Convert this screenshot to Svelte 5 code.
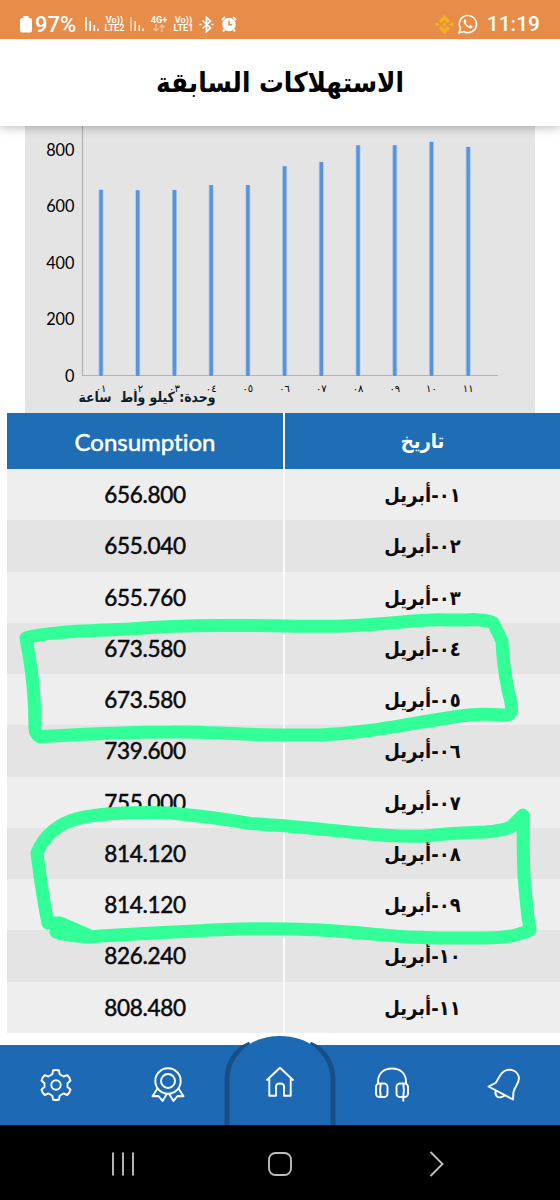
<script lang="ts">
    const readings = [
        { day: "٠١", value: 656.8 },
        { day: "٠٢", value: 655.04 },
        { day: "٠٣", value: 655.76 },
        { day: "٠٤", value: 673.58 },
        { day: "٠٥", value: 673.58 },
        { day: "٠٦", value: 739.6 },
        { day: "٠٧", value: 755 },
        { day: "٠٨", value: 814.12 },
        { day: "٠٩", value: 814.12 },
        { day: "١٠", value: 826.24 },
        { day: "١١", value: 808.48 },
    ];

    const ticks = [800, 600, 400, 200, 0];
    const baseline = 249.5;
    const unitHeight = 0.2828;
    const firstBar = 76;
    const barGap = 36.72;

    function barX(index: number) {
        return firstBar + index * barGap;
    }

    function valueY(value: number) {
        return baseline - value * unitHeight;
    }
</script>

<div class="screen">
    <div class="status-bar">
        <div class="status-group">
            <svg class="battery" width="12" height="17" viewBox="0 0 12 17">
                <path d="M3.5 0h5v2H10a2 2 0 0 1 2 2v10.5a2 2 0 0 1-2 2H2a2 2 0 0 1-2-2V4a2 2 0 0 1 2-2h1.5z" fill="#fff" />
            </svg>
            <span class="percent">97%</span>
            <svg class="signal" width="14" height="16" viewBox="0 0 14 16">
                <path d="M1 1v14M5.2 5v10M9.3 9v6M13 12.5v2.5" />
            </svg>
            <span class="lte">Vo))<br />LTE2</span>
            <svg class="signal thin" width="14" height="16" viewBox="0 0 14 16">
                <path d="M1 1v14" opacity="0.6" />
                <path d="M5.2 5v10M9.3 9v6M13 12.5v2.5" />
            </svg>
            <span class="lte net">
                4G+
                <svg width="12" height="8" viewBox="0 0 12 8">
                    <path d="M3 0v7M.5 4.500L3 7l2.500-2.500M9 8V1M6.500 3.500L9 1l2.500 2.500" />
                </svg>
            </span>
            <span class="lte">Vo))<br />LTE1</span>
            <svg class="bluetooth" width="15" height="17" viewBox="0 0 15 17">
                <path d="M3.5 4.500l8 7.500-4 3.500v-14l4 3.500-8 7.500" />
                <path d="M.5 8.500h2M12.500 8.500h2" />
            </svg>
            <svg class="alarm" width="16" height="16" viewBox="0 0 16 16">
                <circle cx="8" cy="8.5" r="6.7" fill="#fff" />
                <path d="M1 4l3-3M15 4l-3-3M3.5 13.5L2 15.3M12.5 13.5l1.5 1.8" stroke="#fff" stroke-width="2" />
                <path d="M8 4.500v4.300h3.200" fill="none" stroke="#e88d49" stroke-width="1.500" />
            </svg>
        </div>
        <div class="status-group">
            <svg class="binance" width="19" height="19" viewBox="0 0 20 20" fill="#f0b41b">
                <path d="M10 0l6 6-2.600 2.600L10 5.200 6.600 8.600 4 6zM10 20l6-6-2.600-2.600-3.400 3.400-3.400-3.400L4 14zM2.400 7.600L4.800 10l-2.400 2.400L0 10zM17.600 7.600L20 10l-2.400 2.400-2.400-2.400zM10 7.600l2.400 2.400-2.400 2.400L7.600 10z" />
            </svg>
            <svg class="whatsapp" width="20" height="20" viewBox="0 0 20 20">
                <path d="M1.200 18.800l1.200-4.600A8.600 8.600 0 1 1 5.800 17.600z" fill="none" stroke="#fff" stroke-width="1.600" />
                <path d="M6.800 5.200c-1.900 1.200-1.200 4.100 1 6.400s4.700 3.700 6.300 2.200c.8-.8.7-1.400-.2-1.900l-1.400-.7c-.8-.3-1 .8-1.600.9-1 0-3.100-2.100-3.200-3 .1-.6 1-.9.7-1.600l-.7-1.700c-.2-.5-.5-.8-.9-.6z" fill="#fff" />
            </svg>
            <span class="clock">11:19</span>
        </div>
    </div>

    <header dir="rtl"><h1>الاستهلاكات السابقة</h1></header>

    <main>
        <svg class="chart" width="510" height="287" viewBox="0 0 510 287">
            <path d="M57.5 0V249.5H473" class="axis" />
            {#each ticks as tick}
                <text class="tick" x="49.5" y={valueY(tick) + 6.5}>{tick}</text>
            {/each}
            {#each readings as { day, value }, index}
                <rect class="bar-edge" x={barX(index) - 2.5} y={valueY(value)} width="5" height={value * unitHeight + 0.5} />
                <rect class="bar" x={barX(index) - 1.7} y={valueY(value)} width="3.4" height={value * unitHeight + 0.5} />
                <text class="day" x={barX(index)} y="266">{day}</text>
            {/each}
            <text class="unit" x="122" y="276" direction="rtl" textLength="137" lengthAdjust="spacingAndGlyphs">وحدة: كيلو واط&nbsp; ساعة</text>
        </svg>

        <div class="table">
            <div class="row head">
                <span>Consumption</span>
                <span class="date" dir="rtl">تاريخ</span>
            </div>
            {#each readings as { day, value }}
                <div class="row">
                    <span>{value.toFixed(3)}</span>
                    <span class="date" dir="rtl">{day}-أبريل</span>
                </div>
            {/each}
        </div>
    </main>

    <nav>
        <svg class="home-tab" width="112" height="90" viewBox="0 0 112 90">
            <path d="M3 90V46C3 27 12 15 26 9H86C100 15 109 27 109 46V90" fill="#1e69b3" />
            <path d="M3 90V46C3 27 12 15 26 9M86 9C100 15 109 27 109 46V90" fill="none" stroke="#184f86" stroke-width="5" />
            <path d="M6 90V46C7 17 28 1 56 1s49 16 50 45v44z" fill="#1e69b3" />
        </svg>
        <div class="tab">
            <svg width="34" height="34" viewBox="0 0 34 34">
                <path d="M14 2.500Q17 1.500 20 2.500L20.700 6.300L24.500 8.500L28.300 7.200Q31 9.500 31.500 12.500L28.500 15.300V19L31.500 21.500Q31 24.500 28.300 27L24.500 25.500L20.700 27.700L20 31.500Q17 32.500 14 31.500L13.300 27.700L9.500 25.500L5.700 27Q3 24.500 2.500 21.500L5.500 19V15.300L2.500 12.500Q3 9.500 5.700 7.200L9.500 8.500L13.300 6.300Z" />
                <circle cx="17" cy="17" r="4.7" />
            </svg>
        </div>
        <div class="tab">
            <svg width="34" height="36" viewBox="0 0 34 36">
                <circle cx="17" cy="14" r="12.7" />
                <circle cx="17" cy="14" r="7" />
                <path d="M6.500 21.500L1.500 29.300L7.500 29L11.500 34L16 26.800M27.500 21.500L32.500 29.300L26.500 29L22.500 34L18 26.800" />
            </svg>
        </div>
        <div class="tab home">
            <svg width="30" height="32" viewBox="0 0 30 32">
                <path d="M1.500 15.500L15 2.800L28.500 15.500M4.300 13.500V30.700H11V21.500Q11 18.500 15 18.500T19 21.500V30.700H25.700V13.500" />
            </svg>
        </div>
        <div class="tab">
            <svg width="36" height="36" viewBox="0 0 36 36">
                <path d="M4 17V15C4 6 10 1.500 18 1.500S32 6 32 15V17" />
                <rect x="2" y="16.5" width="11.5" height="13.5" rx="3.5" />
                <rect x="22.5" y="16.5" width="11.5" height="13.5" rx="3.5" />
                <path d="M6.700 17Q5.500 23 6.700 30M29.300 17Q30.500 23 29.300 30V34.500" />
            </svg>
        </div>
        <div class="tab">
            <svg width="34" height="34" viewBox="0 0 34 34">
                <path d="M1.500 18.500L26 31.500L26.500 24C28 18 32 16 32 10C31 3 24 0 17.500 3C12 6 12 11 8.500 15Z" />
                <path d="M9 22.500C7 27 10.500 30 14 29.200Q17 28.500 18 27.200" />
            </svg>
        </div>
    </nav>

    <footer>
        <svg width="24" height="24" viewBox="0 0 24 24"><path d="M2 .5v23M12 .5v23M22 .5v23" /></svg>
        <svg width="26" height="26" viewBox="0 0 26 26"><rect x="2" y="2" width="22" height="22" rx="6.5" /></svg>
        <svg width="24" height="26" viewBox="0 0 24 26"><path d="M6.500 1l12 12-12 12" /></svg>
    </footer>

    <svg class="marks" width="560" height="1200" viewBox="0 0 560 1200">
        <path d="M26 638C45 632 83 631 130 629C165 626 180 625.500 220 625.500C280 625 300 627 345 626C380 625 405 621 430 620C445 619 455 621 473 619.500Q486 620 493 622.500L502 641Q503 665 508 690Q513 708 511 712Q510 715.500 503 715Q478 713 460 716C405 724 370 733 320 735C230 736 215 731 170 732Q120 732 43 736.500L40 737Q35 734 35 728Q35 690 29 655Z" />
        <path d="M48 923Q43 900 37 853C44 836 58 824 76 819C105 811 165 812 180 814Q220 818 250 823.500C300 826 345 832 360 833Q395 837 425 836Q450 833 485 832Q507 830 512 826L523 815Q523 850 524 876Q525 888 528 918Q530 928 530 930C516 937 500 938 485 938C390 939 390 934 320 930C250 927 210 930 195 931Q130 934 86 937Q62 935 56 932M48 923L60 923Q74 929 88 935L56 932" />
    </svg>
</div>

<style>
    :global(body) {
        margin: 0;
        background: #fff;
    }

    .screen {
        position: relative;
        display: flex;
        flex-direction: column;
        width: 560px;
        height: 1200px;
        overflow: hidden;
        background: #fff;
        color: #0b0b0d;
        font-family: Lato, "DejaVu Sans", sans-serif;
        font-variant-ligatures: no-common-ligatures;
    }

    .status-bar {
        position: relative;
        z-index: 2;
        display: flex;
        justify-content: space-between;
        box-sizing: border-box;
        height: 39px;
        padding: 8px 20px 0;
        background: #e88d49;
        color: #fff;
        font-family: Roboto, sans-serif;
    }

    .status-group {
        display: flex;
        align-items: center;
        height: 32px;
    }

    .percent {
        width: 43px;
        margin: 0 7px 0 3px;
        font-size: 22px;
        font-weight: 500;
        white-space: nowrap;
    }

    .signal,
    .bluetooth {
        fill: none;
        stroke: #fff;
        stroke-width: 1.7;
    }

    .signal.thin {
        margin-left: 5px;
        stroke-width: 1.5;
    }

    .lte {
        width: 21px;
        margin-left: 5px;
        font-size: 9.2px;
        font-weight: 600;
        line-height: 8.5px;
        text-align: center;
        white-space: nowrap;
    }

    .lte.net {
        width: 18px;
        margin-left: 6px;
    }

    .lte svg {
        display: block;
        margin: 0 auto;
        fill: none;
        stroke: #fff;
        stroke-width: 1.2;
        opacity: 0.5;
    }

    .bluetooth {
        margin-left: 5px;
    }

    .alarm {
        margin-left: 7px;
    }

    .whatsapp {
        margin: 0 9px 0 4px;
    }

    .clock {
        font-size: 21px;
        font-weight: 500;
    }

    header {
        z-index: 1;
        display: flex;
        align-items: center;
        justify-content: center;
        box-sizing: border-box;
        height: 87px;
        padding-bottom: 2px;
        background: #fff;
        box-shadow: 0 2px 9px rgba(0, 0, 0, 0.25);
    }

    h1 {
        margin: 0;
        color: #000;
        font-family: "DejaVu Sans Condensed", "DejaVu Sans", sans-serif;
        font-size: 27.5px;
        font-stretch: condensed;
        font-weight: 700;
        line-height: 40px;
    }

    main {
        flex: 1;
    }

    .chart {
        display: block;
        margin-left: 25px;
        background: #e4e4e4;
    }

    .axis {
        fill: none;
        stroke: #b1b1b1;
        stroke-width: 1.2;
    }

    .tick {
        font-size: 16.3px;
        text-anchor: end;
    }

    .bar-edge {
        fill: #a9c9ee;
    }

    .bar {
        fill: #5a94d8;
    }

    .day {
        font-family: "DejaVu Sans", sans-serif;
        font-size: 10px;
        text-anchor: middle;
    }

    .unit {
        fill: #0f1d2b;
        font-family: "DejaVu Sans Condensed", "DejaVu Sans", sans-serif;
        font-size: 14px;
        font-stretch: condensed;
        font-weight: 700;
        text-anchor: middle;
    }

    .table {
        margin-left: 7px;
    }

    .row {
        display: grid;
        grid-template-columns: 276px 1fr;
        gap: 2px;
        height: 51.27px;
        background: #fafafa;
        font-size: 22.5px;
        line-height: 50px;
        text-align: center;
        letter-spacing: -0.3px;
        -webkit-text-stroke: 0.5px;
    }

    .row span {
        box-sizing: border-box;
        padding-top: 1px;
        background: #e4e4e4;
    }

    .row:nth-child(even) span {
        background: #eee;
    }

    .row .date {
        font-family: "DejaVu Sans Condensed", "DejaVu Sans", sans-serif;
        font-size: 20px;
        font-stretch: condensed;
        font-weight: 700;
        letter-spacing: 0;
        -webkit-text-stroke: 0;
    }

    .row.head {
        height: 56px;
        color: #fff;
        font-size: 24px;
        line-height: 55px;
        letter-spacing: 0;
    }

    .row.head span {
        background: #1e6db5;
    }

    nav {
        position: relative;
        display: grid;
        grid-template-columns: repeat(5, 1fr);
        height: 80px;
        background: #1e69b3;
    }

    .home-tab {
        position: absolute;
        left: 224px;
        bottom: 0;
    }

    .tab {
        position: relative;
        display: flex;
        align-items: center;
        justify-content: center;
    }

    .tab.home {
        padding-bottom: 8px;
    }

    .tab svg {
        fill: none;
        stroke: #fff;
        stroke-width: 1.9;
        stroke-linejoin: round;
    }

    footer {
        display: flex;
        align-items: center;
        justify-content: space-between;
        box-sizing: border-box;
        height: 75px;
        padding: 2px 112px 0 111px;
        background: #000;
    }

    footer svg {
        fill: none;
        stroke: #bdbdbd;
        stroke-width: 1.9;
    }

    .marks {
        position: absolute;
        inset: 0;
        z-index: 3;
        fill: none;
        stroke: #33ff99;
        stroke-width: 13;
        stroke-linecap: round;
        stroke-linejoin: round;
        pointer-events: none;
    }
</style>
